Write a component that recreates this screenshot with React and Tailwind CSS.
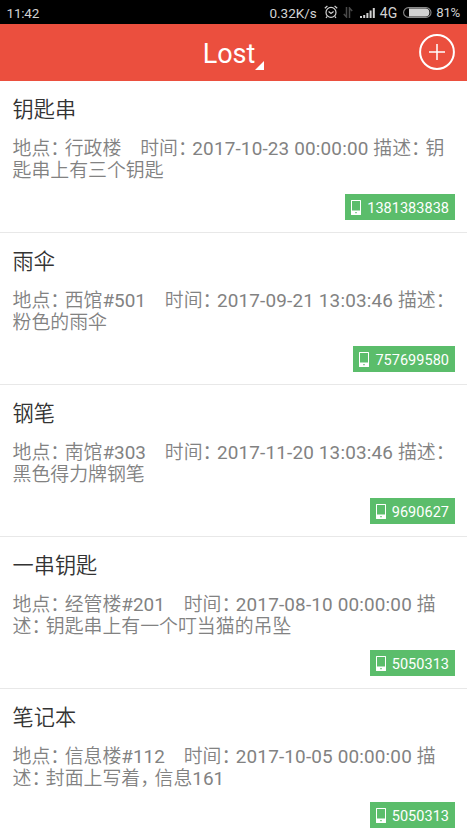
const items = [
    { title: '钥匙串', place: '行政楼', time: '2017-10-23 00:00:00', desc: '钥匙串上有三个钥匙', phone: '1381383838' },
    { title: '雨伞', place: '西馆#501', time: '2017-09-21 13:03:46', desc: '粉色的雨伞', phone: '757699580' },
    { title: '钢笔', place: '南馆#303', time: '2017-11-20 13:03:46', desc: '黑色得力牌钢笔', phone: '9690627' },
    { title: '一串钥匙', place: '经管楼#201', time: '2017-08-10 00:00:00', desc: '钥匙串上有一个叮当猫的吊坠', phone: '5050313' },
    { title: '笔记本', place: '信息楼#112', time: '2017-10-05 00:00:00', desc: '封面上写着，信息161', phone: '5050313' },
];

// Full-width punctuation is set tighter than the characters around it
function Tight({ text }) {
    return text.split(/([：，])/).map((part, i) =>
        part === '：' || part === '，' ? (
            <span key={i} className="[font-feature-settings:'halt'] tracking-[4.9px]">{part}</span>
        ) : (
            part
        )
    );
}

function StatusBar() {
    return (
        <div className="h-6 bg-black flex items-center pl-[6.5px] pr-[7px] text-[13.5px] leading-6 text-[#d2d2d2]">
            <span className="pt-px tracking-[-0.2px]">11:42</span>
            <span className="ml-auto pt-px">0.32K/s</span>
            <svg className="ml-[7px] w-[14px] h-[14px]" viewBox="0 0 14 14" fill="none" stroke="currentColor" strokeWidth="1.2">
                <circle cx="7" cy="7.4" r="5" />
                <path d="M4.6 6.6 7 8.4l2.6-1.8M.8 3.2 3.4 1M13.2 3.2 10.6 1M3.2 11.4 2 13M10.8 11.4 12 13" />
            </svg>
            <svg className="ml-[5px] mt-px w-[10px] h-[11px]" viewBox="0 0 10 11" fill="none" stroke="#4a4a4a" strokeWidth="1.5">
                <path d="M3.5 0v10L.8 7M6.5 11V1l2.7 3" />
            </svg>
            <svg className="ml-[7px] mt-[2px] w-[15px] h-[10px]" viewBox="0 0 15 10" fill="currentColor">
                <path d="M0 8h2v2H0zM3.2 7h2v3h-2zM6.4 5h2v5h-2zM9.6 2.6h2V10h-2zM12.8 0h2v10h-2z" />
            </svg>
            <span className="ml-[5px] pt-px text-[14px]">4G</span>
            <svg className="ml-[6px] w-[29px] h-[11px]" viewBox="0 0 29 11">
                <rect x=".6" y=".6" width="27.4" height="9.8" rx="4.9" fill="none" stroke="#8a8a8a" strokeWidth="1.1" />
                <path d="M6 1.6h16.5a3.9 3.9 0 0 1 0 7.8H6z" fill="#d2d2d2" />
            </svg>
            <span className="ml-[4px] pt-px text-[13.3px] tracking-[-0.3px]">81%</span>
        </div>
    );
}

function Header() {
    return (
        <header className="relative h-[57px] bg-[#eb4f3e] flex items-center justify-center text-white">
            <div className="flex items-end pt-[2px]">
                <h1 className="text-[27px] leading-[34px]">Lost</h1>
                <svg className="w-[9px] h-[9px] mb-[1px]" viewBox="0 0 9 9" fill="currentColor">
                    <path d="M9 0v9H0z" />
                </svg>
            </div>
            <button className="absolute right-3 top-[10px]">
                <svg className="w-9 h-9" viewBox="0 0 36 36" fill="none" stroke="currentColor">
                    <circle cx="18" cy="18" r="16.9" strokeWidth="2" />
                    <path d="M18 10v16M10 18h16" strokeWidth="1.5" />
                </svg>
            </button>
        </header>
    );
}

function PhoneBadge({ phone }) {
    return (
        <a className="h-[26px] bg-[#5bbd6b] text-white text-[14.5px] flex items-center gap-[6px] pl-[6px] pr-[6px]">
            <svg className="w-[10px] h-[15px]" viewBox="0 0 10 15" fill="currentColor">
                <path fillRule="evenodd" d="M.6 0h8.8a.6.6 0 0 1 .6.6v13.8a.6.6 0 0 1-.6.6H.6a.6.6 0 0 1-.6-.6V.6A.6.6 0 0 1 .6 0zM1 1v9.4h8V1zM4.3 12.1v1.2h1.4v-1.2z" />
            </svg>
            <span className="leading-[26px] pt-[3px] tracking-[0.03px]">{phone}</span>
        </a>
    );
}

function Item({ item }) {
    return (
        <li className="h-[152px] border-b border-[#e8e8e8] pl-[12.5px] pr-2.5 pt-[13.5px] flex flex-col">
            <h2 className="text-[21.2px] leading-[30px] text-[#333]">{item.title}</h2>
            <p className="mt-[13px] h-[56.5px] text-[18.9px] leading-[22.6px] text-[#828282]">
                <Tight text={`地点：${item.place}\u3000时间：`} />
                <span className="tracking-[0.17px]">{item.time} </span>
                <Tight text={`描述：${item.desc}`} />
            </p>
            <div className="flex justify-end pr-0.5">
                <PhoneBadge phone={item.phone} />
            </div>
        </li>
    );
}

export default function App() {
    return (
        <div className="h-[831px] overflow-hidden bg-white font-[Roboto,'Noto_Sans_CJK_SC_DemiLight','Noto_Sans_CJK_SC',sans-serif]" lang="zh-CN">
            <StatusBar />
            <Header />
            <ul>
                {items.map((item) => (
                    <Item key={item.title} item={item} />
                ))}
            </ul>
        </div>
    );
}
